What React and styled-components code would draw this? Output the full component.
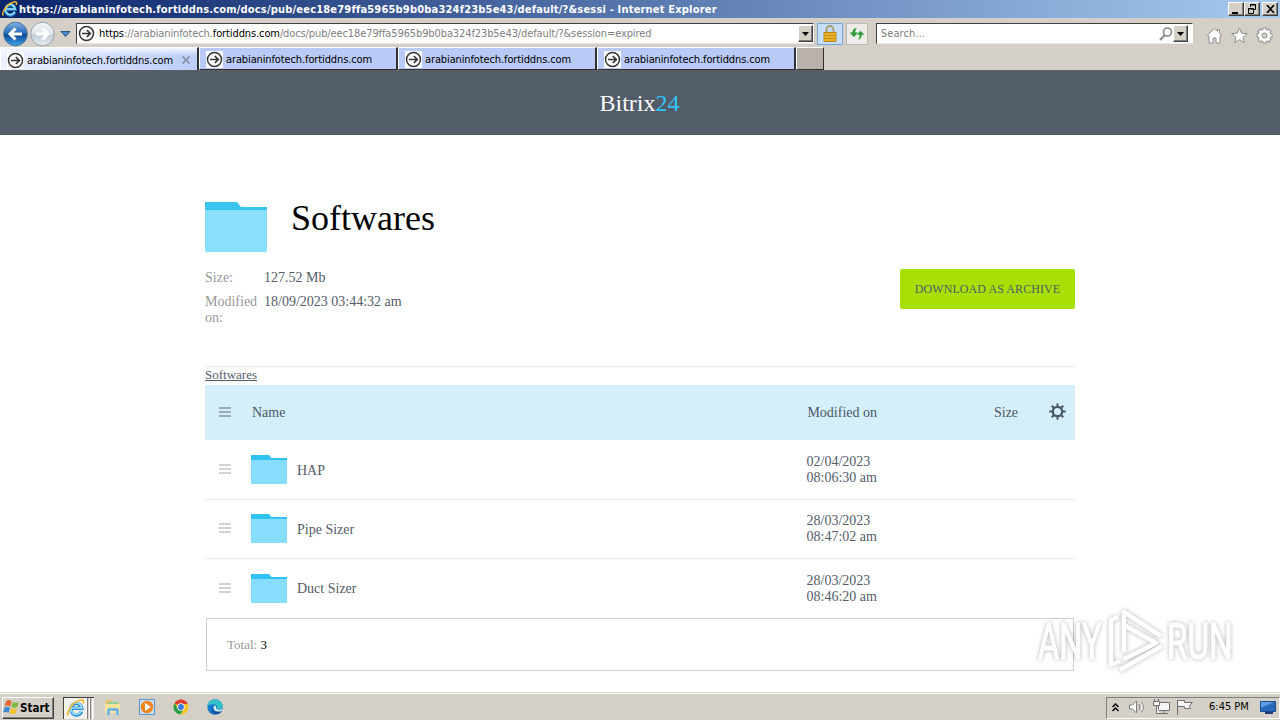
import React from "react";
import styled, { createGlobalStyle, css } from "styled-components";

const face = "#d4d0c8";
const ink = "#535c69";

const fontUi = css`
    font-family: "DejaVu Sans Condensed", "DejaVu Sans", sans-serif;
    font-size: 11px;
    line-height: 14px;
`;

const raised = css`
    background: ${face};
    border: 1px solid;
    border-color: #fff #404040 #404040 #fff;
    box-shadow: inset -1px -1px 0 #808080;
`;

const GlobalStyle = createGlobalStyle`
    * { box-sizing: border-box; }

    body {
        margin: 0;
        overflow: hidden;
        background: #fff;
    }

    svg { display: block; flex: none; }
`;

const Screen = styled.div`
    display: flex;
    flex-direction: column;
    width: 1280px;
    height: 720px;
    font-family: "Liberation Serif", serif;
    white-space: nowrap;
`;

/* browser window */

const TitleBar = styled.div`
    display: flex;
    align-items: center;
    height: 18px;
    padding: 0 2px 0 2px;
    background: linear-gradient(90deg, #0a246a, #a6caf0);
`;

const WindowTitle = styled.div`
    ${fontUi}
    flex: 1;
    margin: 1px 0 0 1px;
    color: #fff;
    font-weight: bold;
    letter-spacing: ${p => p.$spacing}px;
`;

const WindowButton = styled.div`
    ${raised}
    display: grid;
    place-items: center;
    width: 16px;
    height: 14px;
    margin-left: ${p => p.$gap || 0}px;
`;

const Toolbar = styled.div`
    display: flex;
    align-items: center;
    height: 29px;
    padding: 2px 7px 0 2px;
    background: ${face};
`;

const Field = styled.div`
    display: flex;
    align-items: center;
    width: ${p => p.$width}px;
    height: 21px;
    margin-left: ${p => p.$gap}px;
    padding: 0 ${p => p.$end || 0}px 0 ${p => p.$start}px;
    background: #fff;
    border: 1px solid;
    border-color: #404040 #fff #e8e6e0 #404040;
`;

const Url = styled.div`
    ${fontUi}
    flex: 1;
    margin: 1px 0 0 4px;
    color: #808080;
    letter-spacing: ${p => p.$spacing}px;

    b {
        color: #000;
        font-weight: normal;
    }
`;

const DropButton = styled.div`
    ${raised}
    display: grid;
    place-items: center;
    width: 15px;
    height: 17px;
`;

const ToolButton = styled.div`
    display: grid;
    place-items: center;
    width: ${p => p.$width}px;
    height: 22px;
    margin-left: 3px;
    background: ${p => p.$fill};
    border: 1px solid ${p => p.$edge};
`;

const Corner = styled.div`
    display: flex;
    gap: 8px;
    margin-left: 13px;
    padding-top: 3px;
`;

const TabStrip = styled.div`
    display: flex;
    height: 24px;
    background: ${face};
    border-bottom: 1px solid #606060;
`;

const Tab = styled.div`
    ${fontUi}
    display: flex;
    align-items: center;
    width: 199px;
    height: 23px;
    padding: 2px 7px 0 6px;
    letter-spacing: -0.12px;
    color: #000;
    background: ${p => p.$active
        ? "linear-gradient(#f4f7ff, transparent 35%), linear-gradient(90deg, #eef2fd, #d3dffb 45%, #bccdf7)"
        : "#bacaf6"};
    border-top: 1px solid #fff;
    border-left: 1px solid #fff;
    border-right: 2px solid #303030;
    border-bottom: ${p => p.$active ? "0" : "1px solid #303030"};

    span {
        flex: 1;
        margin: 1px 0 0 3px;
    }
`;

const NewTab = styled.div`
    width: 28px;
    height: 23px;
    background: #b8b2aa;
    border: 1px solid;
    border-color: #fff #303030 #303030 #fff;
`;

/* document */

const SiteHeader = styled.header`
    display: flex;
    justify-content: center;
    height: 64px;
    padding: 18px 1px 0 0;
    background: ${ink};
    color: #fff;
    font-size: 24px;
    line-height: 28px;

    span { color: #2fc6f6; }
`;

const Main = styled.main`
    flex: 1;
    width: 870px;
    margin: 0 auto;
    padding-top: 67px;
    color: ${ink};
    font-size: 14px;
    line-height: 16px;
`;

const Heading = styled.div`
    display: flex;
    height: 50px;
    gap: 24px;
`;

const Title = styled.h1`
    margin: -4px 0 0;
    color: #000;
    font-size: 36px;
    font-weight: normal;
    line-height: 40px;
`;

const Summary = styled.div`
    display: flex;
    justify-content: space-between;
    height: 97px;
    margin-top: 17px;
`;

const Facts = styled.dl`
    display: grid;
    grid-template-columns: 59px auto;
    grid-auto-rows: min-content;
    row-gap: 8px;
    margin: 1px 0 0;

    dt {
        color: #999;
        white-space: normal;
        padding-right: 5px;
    }

    dd { margin: 0; }
`;

const Download = styled.button`
    width: 175px;
    height: 40px;
    padding: 0;
    border: 0;
    border-radius: 2px;
    background: #a8e005;
    color: ${ink};
    font: 12px "Liberation Serif", serif;
    letter-spacing: 0.08px;
`;

const Crumbs = styled.nav`
    height: 19px;
    border-top: 1px solid #eaeaea;
    font-size: 13px;
    line-height: 16px;

    a {
        color: ${ink};
        text-decoration: underline;
    }
`;

const Row = styled.div`
    display: grid;
    grid-template-columns: 46px 555.6px 187.400px 55px 1fr;
    align-items: center;
    height: ${p => p.$height}px;
    border-bottom: ${p => p.$line ? "1px solid #eaeef1" : "0"};
`;

const HeadRow = styled(Row)`
    grid-template-columns: 47px 555.4px 186.600px 55px 1fr;
    background: #d5effa;
    color: #4b5767;

    > svg { margin-top: -3px; }
`;

const Grip = styled.div`
    width: 12px;
    height: 10px;
    margin: -2px 0 0 14px;
    border: solid ${p => p.$dark ? "#9aabb8" : "#d0d4d7"};
    border-width: 2px 0;
    background: linear-gradient(transparent 2px, ${p => p.$dark ? "#9aabb8" : "#d0d4d7"} 2px 4px, transparent 4px);
`;

const Name = styled.div`
    display: flex;
    align-items: center;
    gap: 10px;
    margin-top: ${p => p.$lift}px;

    span { padding-top: 2px; }
`;

const Total = styled.div`
    width: 868px;
    height: 53px;
    margin-left: 1px;
    padding: 18px 20px;
    border: 1px solid #d0d0d0;
    color: #999;
    font-size: 13px;

    b {
        color: #000;
        font-weight: normal;
    }
`;

const Watermark = styled.svg`
    position: absolute;
    left: 1030px;
    top: 600px;
    filter: drop-shadow(0 0 2px rgba(0, 0, 0, 0.3));
`;

/* taskbar */

const Taskbar = styled.footer`
    display: flex;
    align-items: center;
    height: 28px;
    padding: 2px 0 0 2px;
    background: ${face};
    border-top: 1px solid ${face};
    box-shadow: inset 0 1px 0 #fff;
`;

const StartButton = styled.div`
    ${raised}
    ${fontUi}
    display: flex;
    align-items: center;
    width: 52px;
    height: 22px;
    padding-left: 0;
    font-size: 11.500px;
    font-weight: bold;
`;

const RunningApp = styled.div`
    display: flex;
    width: 31px;
    height: 22px;
    margin-left: 9px;
    border: 1px solid #404040;
    border-width: 1px 0 0 1px;
    background: #f2f0ec;

    > svg { margin: 1px 2px 0 3px; }
`;

const RunningEdge = styled.div`
    width: 3px;
    border-left: 1px solid #808080;
    border-right: 1px solid #fff;
    background: ${face};
`;

const Launchers = styled.div`
    display: flex;
    flex: 1;
    gap: 16px;
    margin: -1px 0 0 10px;
`;

const Tray = styled.div`
    ${fontUi}
    display: flex;
    align-items: center;
    width: 174px;
    height: 22px;
    padding: 0 3px 1px 5px;
    border: 1px solid;
    border-color: #808080 #fff #fff #808080;

    span {
        flex: 1;
        margin-left: 13px;
    }
`;

const IeIcon = ({ size = 16 }) => (
    <svg width={size} height={size} viewBox="0 0 18 18" fill="none">
        <path d="M14.500 12.300A5.500 5.800 0 1 1 14.800 9.300H5" stroke="#2b8fd8" strokeWidth="3.400" />
        <path d="M14.300 12A5.500 5.800 0 1 1 14.800 9H5" stroke="#9fdffa" strokeWidth="1.700" />
        <path d="M1.500 16.500C-1 13 5 4 12 1.500c5-1.800 5 1 3.800 3" stroke="#f1bd29" strokeWidth="1.600" />
    </svg>
);

const PageIcon = () => (
    <svg width="17" height="17" viewBox="0 0 17 17" fill="none" stroke="#333">
        <path d="M0 0h17v17H0z" fill="#fff" stroke="none" />
        <circle cx="8.500" cy="8.500" r="7" fill="#fff" strokeWidth="1.500" />
        <path d="M4 8.500h8M8.800 5l3.500 3.500L8.800 12" strokeWidth="1.700" />
    </svg>
);

const NavIcon = ({ back }) => (
    <svg width="27" height="26" viewBox="0 0 26 26">
        <defs>
            <linearGradient id={back ? "back" : "next"} x2="0" y2="1">
                <stop offset="0" stopColor={back ? "#86b5e6" : "#f4f6f8"} />
                <stop offset=".48" stopColor={back ? "#2167b9" : "#dfe4ea"} />
                <stop offset=".55" stopColor={back ? "#0d4795" : "#c2ccd8"} />
                <stop offset="1" stopColor={back ? "#3dabed" : "#e7ecf1"} />
            </linearGradient>
        </defs>
        <circle cx="13" cy="13" r="11.800" fill={`url(#${back ? "back" : "next"})`} stroke={back ? "#4a6c98" : "#9aa3ae"} />
        <path
            d="M19.500 13H8M13 7.500L7.500 13l5.500 5.500"
            transform={back ? undefined : "rotate(180 13 13)"}
            fill="none"
            stroke="#fff"
            strokeWidth="3"
        />
    </svg>
);

const Caret = () => (
    <svg width="7" height="4" viewBox="0 0 7 4"><path d="M0 0h7L3.500 4z" /></svg>
);

const LockIcon = () => (
    <svg width="14" height="18" viewBox="0 0 14 18">
        <path d="M3.500 8V4.500a3.500 3.500 0 0 1 7 0V8" fill="none" stroke="#a99a68" strokeWidth="1.800" />
        <path d="M1 7.500h12v9H1z" fill="#eeb32c" stroke="#b98518" />
        <path d="M2 10.500h10M2 13.500h10" stroke="#c58b12" />
    </svg>
);

const RefreshIcon = () => (
    <svg width="16" height="16" viewBox="0 0 16 16" fill="#2e9b38">
        <path d="M5 11L.5 6.500h3C3.500 3.500 5 2.300 8 1.800 6.500 3 6.300 4.500 6.300 6.500h3z" />
        <path d="M11.500 4.500L16 9h-3c0 3-1.500 4.600-4.500 5 1.500-1.400 1.800-2.800 1.800-5h-3z" stroke="#eef5ee" strokeWidth=".5" />
    </svg>
);

const SearchIcon = () => (
    <svg width="14" height="14" viewBox="0 0 14 14" fill="none" stroke="#858585">
        <circle cx="8.500" cy="5" r="4" strokeWidth="1.600" />
        <path d="M5.500 8.500L1 13" strokeWidth="2" />
    </svg>
);

const HomeIcon = () => (
    <svg width="17" height="17" viewBox="0 0 17 17" fill="#fff" stroke="#8e8e8e">
        <path d="M1 8.500l7.500-7 3 2.800V2.500h2v3.700L16 8.500l-1 1-1-.8v7.300h-4v-5H7v5H3V8.700l-1 .8z" />
    </svg>
);

const StarIcon = () => (
    <svg width="17" height="17" viewBox="0 0 17 17">
        <path d="M8.500 1l2.200 5.200 5.600.4-4.300 3.600 1.400 5.500-4.900-3-4.900 3L5 10.200.7 6.600l5.600-.4z" fill="#fff" stroke="#8e8e8e" />
    </svg>
);

const spokes = [0, 45, 90, 135, 180, 225, 270, 315];

const ToolsIcon = () => (
    <svg width="17" height="17" viewBox="0 0 17 17">
        {spokes.map(a => (
            <path key={a} d="M6.800 4V1h3.400v3" transform={`rotate(${a} 8.500 8.500)`} fill="#fff" stroke="#8e8e8e" />
        ))}
        <circle cx="8.500" cy="8.500" r="4.300" fill="none" stroke="#fff" strokeWidth="3" />
        <circle cx="8.500" cy="8.500" r="2.500" fill={face} stroke="#8e8e8e" />
    </svg>
);

const GearIcon = () => (
    <svg width="17" height="17" viewBox="0 0 17 17" stroke="#4b5969" fill="none">
        <circle cx="8.500" cy="8.500" r="4.700" strokeWidth="2.300" />
        {spokes.map(a => (
            <path key={a} d="M8.500 4V.3" transform={`rotate(${a} 8.500 8.500)`} strokeWidth="2" />
        ))}
    </svg>
);

const BigFolder = () => (
    <svg width="62" height="50" viewBox="0 0 62 50">
        <path d="M0 10V0h31q2 0 3.500 3.500Q35.500 5 37 5h25v5z" fill="#3ac4f0" />
        <path d="M0 8h62v40q0 2-2 2H2q-2 0-2-2z" fill="#8ae0fa" />
    </svg>
);

const SmallFolder = () => (
    <svg width="36" height="29" viewBox="0 0 36 29">
        <path d="M0 6V0h18l2.500 3H36v3z" fill="#31c2f4" />
        <path d="M0 5h36v24H0z" fill="#86defc" />
    </svg>
);

const WindowsIcon = () => (
    <svg width="17" height="17" viewBox="0 0 16 16">
        <path d="M3 2q3-2 5 0L6.800 7q-2.500-1.600-5 0z" fill="#e8652b" />
        <path d="M9 2.500q3 2 6 0L13.500 7.500q-3 1.700-5.500 0z" fill="#82b944" />
        <path d="M1.500 8q2.500-1.600 5 0L5.300 13q-2.500-1.700-5.300 0z" fill="#3d8bd0" />
        <path d="M7.700 8.500q3 1.700 5.500 0L12 13.500q-3 1.800-5.700 0z" fill="#f5c22b" />
    </svg>
);

const ExplorerIcon = () => (
    <svg width="18" height="18" viewBox="0 0 18 18">
        <path d="M2 2h6l1 2h6v8H2z" fill="#e8c764" />
        <path d="M4 4h10v6H4z" fill="#8ccf9d" />
        <path d="M1 6h15v9H1z" fill="#f7e49a" />
        <path d="M3 17v-5q0-2 2-2h8q2 0 2 2v5h-3v-4H6v4z" fill="#77b9de" />
    </svg>
);

const PlayerIcon = () => (
    <svg width="18" height="18" viewBox="0 0 18 18">
        <path d="M1.500 1.500h15v15h-15z" fill="#c8dff2" stroke="#5a94c8" />
        <circle cx="9" cy="9" r="6.200" fill="#f0821c" />
        <path d="M7 5l6 4-6 4z" fill="#fff" />
    </svg>
);

const ChromeIcon = () => (
    <svg width="18" height="18" viewBox="0 0 18 18">
        <circle cx="9" cy="9" r="7.500" fill="#f6c521" />
        <path d="M9 9L2.500 5.200a7.500 7.500 0 0 1 13.400.8H9z" fill="#df3c30" />
        <path d="M2.500 5.200A7.500 7.500 0 0 0 8.400 16.500L12 10.500 6 10.500z" fill="#2b9f4c" />
        <circle cx="9" cy="9" r="3.800" fill="#fff" />
        <circle cx="9" cy="9" r="2.900" fill="#3979dc" />
    </svg>
);

const EdgeIcon = () => (
    <svg width="18" height="18" viewBox="0 0 18 18">
        <circle cx="9" cy="9" r="7.700" fill="#1479cc" />
        <path d="M1.300 8C2-1 16.500-.5 16.700 8c0 3-3.700 4-6 2.700 1.500-3-.7-4.700-3.400-4.500C4.800 6 2.500 7 1.300 8z" fill="#35bfc7" />
        <path d="M7.400 7c-3.500 3 0 8 6.600 6.500 1.200-.3 2-1 2.200-1-2.200 5.500-11 4.500-10.600-1.500C5.700 9 6.200 8 7.400 7z" fill="#124e9c" />
        <path d="M8.500 7.500c1.500 0 2 1.500 1.500 2.800 1 1.700 4 1.600 6 .7l-.5 2c-4 1.500-7.500 0-8-2.500 0-1.500.4-2.500 1-3z" fill="#d4e8ee" />
    </svg>
);

const tabs = [1, 2, 3, 4];

const files = [
    { name: "HAP", date: "02/04/2023", time: "08:06:30 am" },
    { name: "Pipe Sizer", date: "28/03/2023", time: "08:47:02 am" },
    { name: "Duct Sizer", date: "28/03/2023", time: "08:46:20 am" },
];

const BrowserChrome = () => (
    <>
        <TitleBar>
            <IeIcon />
            <WindowTitle $spacing={0.19}>
                https://arabianinfotech.fortiddns.com/docs/pub/eec18e79ffa5965b9b0ba324f23b5e43/default/?&amp;sessi - Internet Explorer
            </WindowTitle>
            <WindowButton>
                <svg width="10" height="9"><path d="M1 7h6v2H1z" /></svg>
            </WindowButton>
            <WindowButton>
                <svg width="10" height="10" fill="none" stroke="#000"><path d="M3.500 3V.5h5v5H7M3 1h6M1.500 4.500h5v5h-5zM1 5h6" /></svg>
            </WindowButton>
            <WindowButton $gap={2}>
                <svg width="9" height="8" stroke="#000" strokeWidth="1.700"><path d="M1 0l7 8M8 0L1 8" /></svg>
            </WindowButton>
        </TitleBar>
        <Toolbar>
            <NavIcon back />
            <NavIcon />
            <svg width="19" height="8" viewBox="0 0 19 8"><path d="M5 1.500h9L9.500 6.500z" fill="#478bc2" stroke="#24577f" /></svg>
            <Field $width={740} $gap={1} $start={1}>
                <PageIcon />
                <Url $spacing={-0.11}>
                    <b>https</b>://arabianinfotech.<b>fortiddns.com</b>/docs/pub/eec18e79ffa5965b9b0ba324f23b5e43/default/?&amp;session=expired
                </Url>
                <DropButton><Caret /></DropButton>
            </Field>
            <ToolButton $width={26} $fill="#c5defa" $edge="#75a7d8"><LockIcon /></ToolButton>
            <ToolButton $width={22} $fill="#eeece8" $edge="#bdbab3"><RefreshIcon /></ToolButton>
            <Field $width={318} $gap={8} $start={0} $end={4}>
                <Url $spacing={0.1}>Search...</Url>
                <SearchIcon />
                <DropButton><Caret /></DropButton>
            </Field>
            <Corner>
                <HomeIcon />
                <StarIcon />
                <ToolsIcon />
            </Corner>
        </Toolbar>
        <TabStrip>
            {tabs.map(tab => (
                <Tab key={tab} $active={tab === 1}>
                    <PageIcon />
                    <span>arabianinfotech.fortiddns.com</span>
                    {tab === 1 && (
                        <svg width="8" height="8" stroke="#8795ad" strokeWidth="1.800"><path d="M.5.5l7 7M7.500.5l-7 7" /></svg>
                    )}
                </Tab>
            ))}
            <NewTab />
        </TabStrip>
    </>
);

const App = () => (
    <Screen>
        <GlobalStyle />
        <BrowserChrome />
        <SiteHeader>Bitrix<span>24</span></SiteHeader>
        <Main>
            <Heading>
                <BigFolder />
                <Title>Softwares</Title>
            </Heading>
            <Summary>
                <Facts>
                    <dt>Size:</dt>
                    <dd>127.52 Mb</dd>
                    <dt>Modified on:</dt>
                    <dd>18/09/2023 03:44:32 am</dd>
                </Facts>
                <Download>DOWNLOAD AS ARCHIVE</Download>
            </Summary>
            <Crumbs><a>Softwares</a></Crumbs>
            <HeadRow $height={55}>
                <Grip $dark />
                <div>Name</div>
                <div>Modified on</div>
                <div>Size</div>
                <GearIcon />
            </HeadRow>
            {files.map((file, i) => (
                <Row key={file.name} $height={i === 0 ? 60 : 59} $line={i < 2}>
                    <Grip />
                    <Name $lift={i === 0 ? 0 : -1}>
                        <SmallFolder />
                        <span>{file.name}</span>
                    </Name>
                    <div>{file.date}<br />{file.time}</div>
                </Row>
            ))}
            <Total>Total: <b>3</b></Total>
        </Main>
        <Watermark width="230" height="80" viewBox="0 0 230 80">
            <g fill="#fff" stroke="#fff" strokeWidth="1.200" fontFamily="Roboto, sans-serif" fontSize="50">
                <text x="0" y="0" transform="translate(8 59) scale(.65 1)">ANY</text>
                <text x="0" y="0" transform="translate(137 59) scale(.665 1)">RUN</text>
            </g>
            <g fill="none" stroke="#fff" strokeWidth="4.500" strokeLinejoin="round">
                <path d="M94 52V12l37 24M94 25l32 18-32 16M88 17l-7 3v45l9-4M90 70l42-24" />
            </g>
        </Watermark>
        <Taskbar>
            <StartButton><WindowsIcon />Start</StartButton>
            <RunningApp>
                <IeIcon size={18} />
                <RunningEdge />
                <RunningEdge />
            </RunningApp>
            <Launchers>
                <ExplorerIcon />
                <PlayerIcon />
                <ChromeIcon />
                <EdgeIcon />
            </Launchers>
            <Tray>
                <svg width="7" height="9" fill="none" stroke="#000" strokeWidth="1.500"><path d="M.5 4L3.500 1l3 3M.5 8l3-3 3 3" /></svg>
                <svg width="31" height="18" fill="#fff" stroke="#808080">
                    <path d="M10.500 7h3l4-4v12l-4-4h-3zM20 6q2 3 0 6M22.500 4q4 5 0 10" />
                </svg>
                <svg width="46" height="18" fill="#f5f5f5" stroke="#707070">
                    <path d="M8.500 4.500h11v8h-11zM10 15.500h8M14 13v2" />
                    <path d="M4.500 1v3M8.500 1v3M3.500 3.500h6v4h-6zM6.500 7.500v8H10" />
                    <path d="M27.500 17V2.500h7v2h8l-3 3 1 3h-6v-2h-7" />
                </svg>
                <span>6:45 PM</span>
                <svg width="16" height="14">
                    <path d="M.5 1.500h15v10H.5z" fill="#2769bc" stroke="#1b4d91" />
                    <path d="M1 2h13L1 8z" fill="#5d9ce0" />
                    <path d="M5 12h8v2H5z" fill="#1d3f76" />
                </svg>
            </Tray>
        </Taskbar>
    </Screen>
);

export default App;
